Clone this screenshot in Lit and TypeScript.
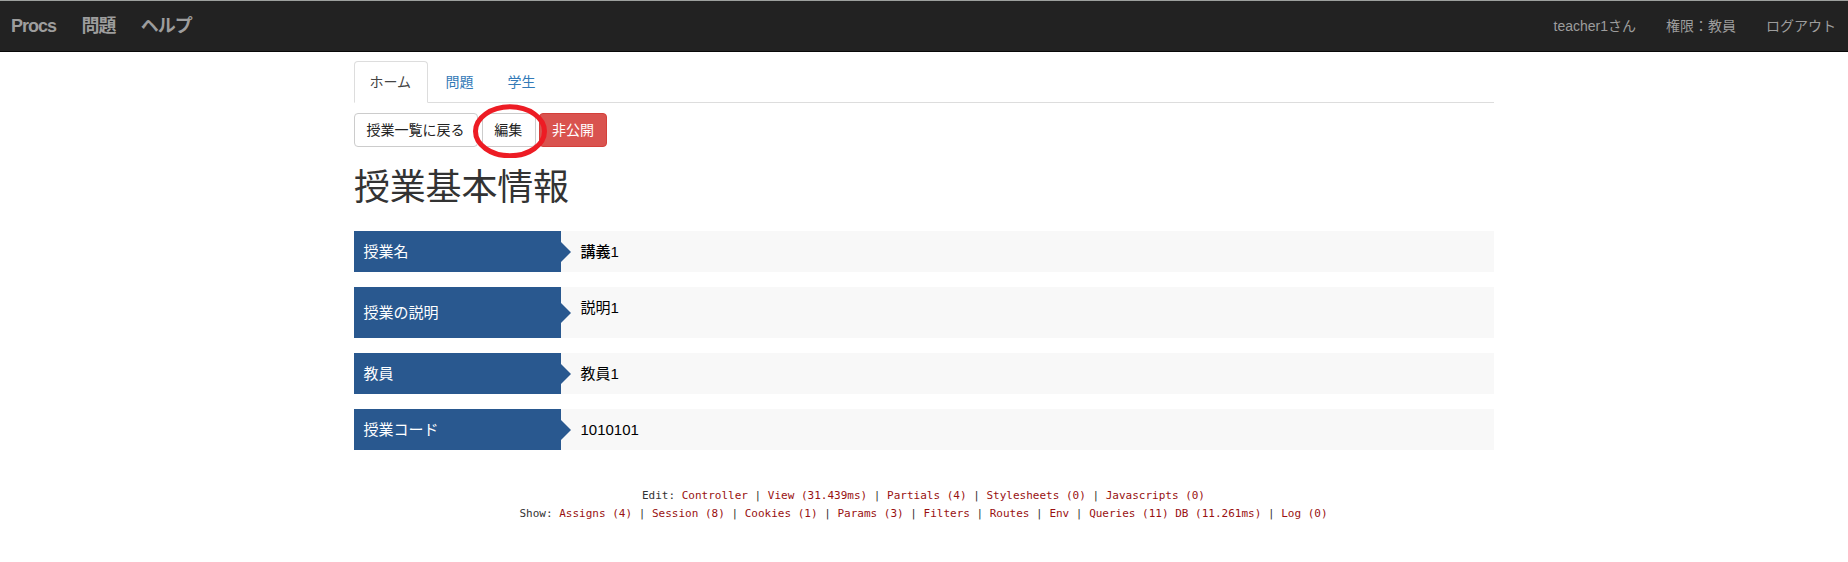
import { LitElement, html, css } from "lit";
import { customElement } from "lit/decorators.js";

const rows = [
  { label: "授業名", value: "講義1", cls: "strong" },
  { label: "授業の説明", value: "説明1", cls: "tall" },
  { label: "教員", value: "教員1", cls: "" },
  { label: "授業コード", value: "1010101", cls: "" },
];

const editLinks = ["Controller", "View (31.439ms)", "Partials (4)", "Stylesheets (0)", "Javascripts (0)"];
const showLinks = [
  "Assigns (4)", "Session (8)", "Cookies (1)", "Params (3)", "Filters",
  "Routes", "Env", "Queries (11) DB (11.261ms)", "Log (0)",
];

@customElement("app-root")
export class AppRoot extends LitElement {
  static styles = css`
    :host {
      display: block;
      height: 562px;
      overflow: hidden;
      background: #fff;
      color: #333;
      font: 14px/20px "Liberation Sans", "Noto Sans CJK JP", sans-serif;
    }
    * { box-sizing: border-box; }
    a { text-decoration: none; cursor: pointer; color: inherit; }
    .navbar {
      display: flex;
      justify-content: space-between;
      height: 52px;
      padding: 0 12px 0 11px;
      background: #222;
      border-top: 1px solid #9da09e;
      border-bottom: 1px solid #080808;
      color: #9d9d9d;
    }
    .brands, .account { display: flex; align-items: center; }
    .brands { gap: 25.4px; font-size: 18px; font-weight: 700; letter-spacing: -1px; }
    .account { gap: 30px; }
    .container { width: 1140px; margin: 9px auto 0; }
    .tabs { display: flex; gap: 2px; height: 42px; border-bottom: 1px solid #ddd; }
    .tab {
      height: 42px;
      padding: 10px 15px;
      border: 1px solid transparent;
      border-radius: 4px 4px 0 0;
      color: #337ab7;
    }
    .tab.active { padding: 10px 15.5px 10px 14.5px; color: #444; background: #fff; border-color: #ddd; border-bottom-color: #fff; }
    .actions { position: relative; display: flex; gap: 3.7px; margin-top: 10px; height: 34px; }
    .btn {
      height: 34px;
      padding: 6px 12.4px 6px 11.6px;
      border: 1px solid #ccc;
      border-radius: 4px;
      background: #fff;
      color: #222;
      font: inherit;
      white-space: nowrap;
    }
    .btn.danger { padding-right: 11.6px; background: #d9534f; border-color: #d43f3a; color: #fff; }
    .marker { position: absolute; left: 118px; top: -11px; width: 76px; height: 56px; pointer-events: none; }
    h1 { margin: 21px 0 23px; font-size: 36px; line-height: 40px; font-weight: 400; letter-spacing: -0.2px; }
    .list { display: grid; gap: 15px; margin: 0; font-size: 15px; line-height: 21px; }
    .row { display: flex; height: 41px; background: #f8f8f8; }
    .row.tall { height: 51px; }
    .label {
      position: relative;
      display: flex;
      align-items: center;
      width: 207px;
      padding: 0 9.5px;
      background: #29588f;
      color: #fff;
    }
    .label::after {
      content: "";
      position: absolute;
      left: 100%;
      top: calc(50% - 10px);
      border: 10px solid transparent;
      border-left-color: #29588f;
      border-right-width: 0;
    }
    .value { margin: 0; padding: 10px 19.5px; color: #000; }
    .strong .value { font-weight: 500; }
    .footnotes {
      margin-top: 37px;
      padding-right: 1px;
      text-align: center;
      font: 11px/18px "DejaVu Sans Mono", monospace;
      color: #333;
    }
    .footnotes a { color: #911; }
  `;

  private links(items: string[]) {
    return items.map((t, i) => html`${i ? " | " : ""}<a>${t}</a>`);
  }

  render() {
    return html`
      <nav class="navbar">
        <div class="brands"><a>Procs</a><a>問題</a><a>ヘルプ</a></div>
        <div class="account"><span>teacher1さん</span><span>権限：教員</span><a>ログアウト</a></div>
      </nav>
      <main class="container">
        <div class="tabs"><a class="tab active">ホーム</a><a class="tab">問題</a><a class="tab">学生</a></div>
        <div class="actions">
          <button class="btn">授業一覧に戻る</button>
          <button class="btn">編集</button>
          <button class="btn danger">非公開</button>
          <svg class="marker" viewBox="0 0 76 56">
            <ellipse cx="38" cy="29.3" rx="34.5" ry="24.5" fill="none" stroke="#ed1c24" stroke-width="5" />
          </svg>
        </div>
        <h1>授業基本情報</h1>
        <div class="list">
          ${rows.map((r) => html`<div class="row ${r.cls}"><div class="label">${r.label}</div><div class="value">${r.value}</div></div>`)}
        </div>
      </main>
      <footer class="footnotes">
        <div>Edit: ${this.links(editLinks)}</div>
        <div>Show: ${this.links(showLinks)}</div>
      </footer>
    `;
  }
}
